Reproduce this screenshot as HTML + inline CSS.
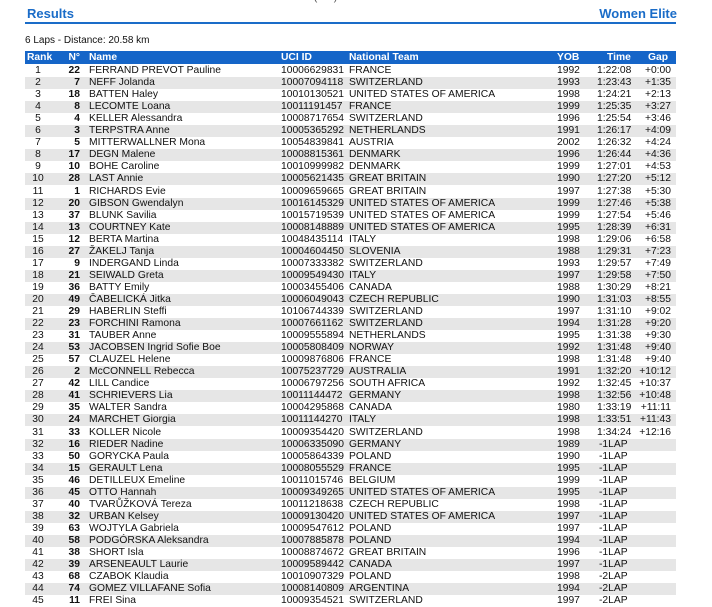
<!DOCTYPE html><html><head><meta charset="utf-8"><style>
body{margin:0;width:712px;height:607px;overflow:hidden;background:#fff;font-family:"Liberation Sans",Arial,sans-serif;position:relative;color:#111}
.t{position:absolute;left:27px;top:6px;font-weight:bold;color:#1a6cc8;font-size:13px}
.we{position:absolute;right:35px;top:6px;font-weight:bold;color:#1a6cc8;font-size:13px}
.line{position:absolute;left:25px;width:651px;top:22px;height:2px;background:#1a6cc8}
.cut{position:absolute;left:280px;top:-9px;font-size:11px;color:#555}
.d{position:absolute;left:25px;top:35px;font-size:10px}
.h{position:absolute;left:25px;width:651px;top:51px;height:13px;background:#1565c8;color:#fff;font-weight:bold;font-size:10.3px}
.r{position:absolute;left:25px;width:651px;height:12.05px;font-size:10.3px;line-height:12px}
.r:nth-child(even){background:#e6e6e6}
.r span,.h span{position:absolute;white-space:nowrap}
.h span{line-height:13px}
.a{left:0;width:26px;text-align:center}
.n{right:596px;font-weight:bold}
.m{left:64px}.u{left:256px}.c{left:324px}.y{left:532px}.tm{left:572px}.g{right:5px}
</style></head><body>
<div class="cut">·  ·  ·  ·  ·  (  ·  ·  )  ·  ·  ·  ·</div>
<div class="t">Results</div><div class="we">Women Elite</div><div class="line"></div>
<div class="d">6 Laps - Distance: 20.58 km</div>
<div class="h"><span class="a" style="text-align:left;left:2px">Rank</span><span class="n">N°</span><span class="m">Name</span><span class="u">UCI ID</span><span class="c">National Team</span><span class="y">YOB</span><span class="tm" style="left:582px">Time</span><span class="g" style="right:8px">Gap</span></div>
<div id="rows" style="position:absolute;left:0;top:65px">
<div class="r" style="top:0px"><span class="a">1</span><span class="n">22</span><span class="m">FERRAND PREVOT Pauline</span><span class="u">10006629831</span><span class="c">FRANCE</span><span class="y">1992</span><span class="tm">1:22:08</span><span class="g">+0:00</span></div>
<div class="r" style="top:12.05px"><span class="a">2</span><span class="n">7</span><span class="m">NEFF Jolanda</span><span class="u">10007094118</span><span class="c">SWITZERLAND</span><span class="y">1993</span><span class="tm">1:23:43</span><span class="g">+1:35</span></div>
<div class="r" style="top:24.1px"><span class="a">3</span><span class="n">18</span><span class="m">BATTEN Haley</span><span class="u">10010130521</span><span class="c">UNITED STATES OF AMERICA</span><span class="y">1998</span><span class="tm">1:24:21</span><span class="g">+2:13</span></div>
<div class="r" style="top:36.15px"><span class="a">4</span><span class="n">8</span><span class="m">LECOMTE Loana</span><span class="u">10011191457</span><span class="c">FRANCE</span><span class="y">1999</span><span class="tm">1:25:35</span><span class="g">+3:27</span></div>
<div class="r" style="top:48.2px"><span class="a">5</span><span class="n">4</span><span class="m">KELLER Alessandra</span><span class="u">10008717654</span><span class="c">SWITZERLAND</span><span class="y">1996</span><span class="tm">1:25:54</span><span class="g">+3:46</span></div>
<div class="r" style="top:60.25px"><span class="a">6</span><span class="n">3</span><span class="m">TERPSTRA Anne</span><span class="u">10005365292</span><span class="c">NETHERLANDS</span><span class="y">1991</span><span class="tm">1:26:17</span><span class="g">+4:09</span></div>
<div class="r" style="top:72.3px"><span class="a">7</span><span class="n">5</span><span class="m">MITTERWALLNER Mona</span><span class="u">10054839841</span><span class="c">AUSTRIA</span><span class="y">2002</span><span class="tm">1:26:32</span><span class="g">+4:24</span></div>
<div class="r" style="top:84.35px"><span class="a">8</span><span class="n">17</span><span class="m">DEGN Malene</span><span class="u">10008815361</span><span class="c">DENMARK</span><span class="y">1996</span><span class="tm">1:26:44</span><span class="g">+4:36</span></div>
<div class="r" style="top:96.4px"><span class="a">9</span><span class="n">10</span><span class="m">BOHE Caroline</span><span class="u">10010999982</span><span class="c">DENMARK</span><span class="y">1999</span><span class="tm">1:27:01</span><span class="g">+4:53</span></div>
<div class="r" style="top:108.45px"><span class="a">10</span><span class="n">28</span><span class="m">LAST Annie</span><span class="u">10005621435</span><span class="c">GREAT BRITAIN</span><span class="y">1990</span><span class="tm">1:27:20</span><span class="g">+5:12</span></div>
<div class="r" style="top:120.5px"><span class="a">11</span><span class="n">1</span><span class="m">RICHARDS Evie</span><span class="u">10009659665</span><span class="c">GREAT BRITAIN</span><span class="y">1997</span><span class="tm">1:27:38</span><span class="g">+5:30</span></div>
<div class="r" style="top:132.55px"><span class="a">12</span><span class="n">20</span><span class="m">GIBSON Gwendalyn</span><span class="u">10016145329</span><span class="c">UNITED STATES OF AMERICA</span><span class="y">1999</span><span class="tm">1:27:46</span><span class="g">+5:38</span></div>
<div class="r" style="top:144.6px"><span class="a">13</span><span class="n">37</span><span class="m">BLUNK Savilia</span><span class="u">10015719539</span><span class="c">UNITED STATES OF AMERICA</span><span class="y">1999</span><span class="tm">1:27:54</span><span class="g">+5:46</span></div>
<div class="r" style="top:156.65px"><span class="a">14</span><span class="n">13</span><span class="m">COURTNEY Kate</span><span class="u">10008148889</span><span class="c">UNITED STATES OF AMERICA</span><span class="y">1995</span><span class="tm">1:28:39</span><span class="g">+6:31</span></div>
<div class="r" style="top:168.7px"><span class="a">15</span><span class="n">12</span><span class="m">BERTA Martina</span><span class="u">10048435114</span><span class="c">ITALY</span><span class="y">1998</span><span class="tm">1:29:06</span><span class="g">+6:58</span></div>
<div class="r" style="top:180.75px"><span class="a">16</span><span class="n">27</span><span class="m">ŽAKELJ Tanja</span><span class="u">10004604450</span><span class="c">SLOVENIA</span><span class="y">1988</span><span class="tm">1:29:31</span><span class="g">+7:23</span></div>
<div class="r" style="top:192.8px"><span class="a">17</span><span class="n">9</span><span class="m">INDERGAND Linda</span><span class="u">10007333382</span><span class="c">SWITZERLAND</span><span class="y">1993</span><span class="tm">1:29:57</span><span class="g">+7:49</span></div>
<div class="r" style="top:204.85px"><span class="a">18</span><span class="n">21</span><span class="m">SEIWALD Greta</span><span class="u">10009549430</span><span class="c">ITALY</span><span class="y">1997</span><span class="tm">1:29:58</span><span class="g">+7:50</span></div>
<div class="r" style="top:216.9px"><span class="a">19</span><span class="n">36</span><span class="m">BATTY Emily</span><span class="u">10003455406</span><span class="c">CANADA</span><span class="y">1988</span><span class="tm">1:30:29</span><span class="g">+8:21</span></div>
<div class="r" style="top:228.95px"><span class="a">20</span><span class="n">49</span><span class="m">ČABELICKÁ Jitka</span><span class="u">10006049043</span><span class="c">CZECH REPUBLIC</span><span class="y">1990</span><span class="tm">1:31:03</span><span class="g">+8:55</span></div>
<div class="r" style="top:241px"><span class="a">21</span><span class="n">29</span><span class="m">HABERLIN Steffi</span><span class="u">10106744339</span><span class="c">SWITZERLAND</span><span class="y">1997</span><span class="tm">1:31:10</span><span class="g">+9:02</span></div>
<div class="r" style="top:253.05px"><span class="a">22</span><span class="n">23</span><span class="m">FORCHINI Ramona</span><span class="u">10007661162</span><span class="c">SWITZERLAND</span><span class="y">1994</span><span class="tm">1:31:28</span><span class="g">+9:20</span></div>
<div class="r" style="top:265.1px"><span class="a">23</span><span class="n">31</span><span class="m">TAUBER Anne</span><span class="u">10009555894</span><span class="c">NETHERLANDS</span><span class="y">1995</span><span class="tm">1:31:38</span><span class="g">+9:30</span></div>
<div class="r" style="top:277.15px"><span class="a">24</span><span class="n">53</span><span class="m">JACOBSEN Ingrid Sofie Boe</span><span class="u">10005808409</span><span class="c">NORWAY</span><span class="y">1992</span><span class="tm">1:31:48</span><span class="g">+9:40</span></div>
<div class="r" style="top:289.2px"><span class="a">25</span><span class="n">57</span><span class="m">CLAUZEL Helene</span><span class="u">10009876806</span><span class="c">FRANCE</span><span class="y">1998</span><span class="tm">1:31:48</span><span class="g">+9:40</span></div>
<div class="r" style="top:301.25px"><span class="a">26</span><span class="n">2</span><span class="m">McCONNELL Rebecca</span><span class="u">10075237729</span><span class="c">AUSTRALIA</span><span class="y">1991</span><span class="tm">1:32:20</span><span class="g">+10:12</span></div>
<div class="r" style="top:313.3px"><span class="a">27</span><span class="n">42</span><span class="m">LILL Candice</span><span class="u">10006797256</span><span class="c">SOUTH AFRICA</span><span class="y">1992</span><span class="tm">1:32:45</span><span class="g">+10:37</span></div>
<div class="r" style="top:325.35px"><span class="a">28</span><span class="n">41</span><span class="m">SCHRIEVERS Lia</span><span class="u">10011144472</span><span class="c">GERMANY</span><span class="y">1998</span><span class="tm">1:32:56</span><span class="g">+10:48</span></div>
<div class="r" style="top:337.4px"><span class="a">29</span><span class="n">35</span><span class="m">WALTER Sandra</span><span class="u">10004295868</span><span class="c">CANADA</span><span class="y">1980</span><span class="tm">1:33:19</span><span class="g">+11:11</span></div>
<div class="r" style="top:349.45px"><span class="a">30</span><span class="n">24</span><span class="m">MARCHET Giorgia</span><span class="u">10011144270</span><span class="c">ITALY</span><span class="y">1998</span><span class="tm">1:33:51</span><span class="g">+11:43</span></div>
<div class="r" style="top:361.5px"><span class="a">31</span><span class="n">33</span><span class="m">KOLLER Nicole</span><span class="u">10009354420</span><span class="c">SWITZERLAND</span><span class="y">1998</span><span class="tm">1:34:24</span><span class="g">+12:16</span></div>
<div class="r" style="top:373.55px"><span class="a">32</span><span class="n">16</span><span class="m">RIEDER Nadine</span><span class="u">10006335090</span><span class="c">GERMANY</span><span class="y">1989</span><span class="tm" style="left:574px">-1LAP</span></div>
<div class="r" style="top:385.6px"><span class="a">33</span><span class="n">50</span><span class="m">GORYCKA Paula</span><span class="u">10005864339</span><span class="c">POLAND</span><span class="y">1990</span><span class="tm" style="left:574px">-1LAP</span></div>
<div class="r" style="top:397.65px"><span class="a">34</span><span class="n">15</span><span class="m">GERAULT Lena</span><span class="u">10008055529</span><span class="c">FRANCE</span><span class="y">1995</span><span class="tm" style="left:574px">-1LAP</span></div>
<div class="r" style="top:409.7px"><span class="a">35</span><span class="n">46</span><span class="m">DETILLEUX Emeline</span><span class="u">10011015746</span><span class="c">BELGIUM</span><span class="y">1999</span><span class="tm" style="left:574px">-1LAP</span></div>
<div class="r" style="top:421.75px"><span class="a">36</span><span class="n">45</span><span class="m">OTTO Hannah</span><span class="u">10009349265</span><span class="c">UNITED STATES OF AMERICA</span><span class="y">1995</span><span class="tm" style="left:574px">-1LAP</span></div>
<div class="r" style="top:433.8px"><span class="a">37</span><span class="n">40</span><span class="m">TVARŮŽKOVÁ Tereza</span><span class="u">10011218638</span><span class="c">CZECH REPUBLIC</span><span class="y">1998</span><span class="tm" style="left:574px">-1LAP</span></div>
<div class="r" style="top:445.85px"><span class="a">38</span><span class="n">32</span><span class="m">URBAN Kelsey</span><span class="u">10009130420</span><span class="c">UNITED STATES OF AMERICA</span><span class="y">1997</span><span class="tm" style="left:574px">-1LAP</span></div>
<div class="r" style="top:457.9px"><span class="a">39</span><span class="n">63</span><span class="m">WOJTYLA Gabriela</span><span class="u">10009547612</span><span class="c">POLAND</span><span class="y">1997</span><span class="tm" style="left:574px">-1LAP</span></div>
<div class="r" style="top:469.95px"><span class="a">40</span><span class="n">58</span><span class="m">PODGÓRSKA Aleksandra</span><span class="u">10007885878</span><span class="c">POLAND</span><span class="y">1994</span><span class="tm" style="left:574px">-1LAP</span></div>
<div class="r" style="top:482px"><span class="a">41</span><span class="n">38</span><span class="m">SHORT Isla</span><span class="u">10008874672</span><span class="c">GREAT BRITAIN</span><span class="y">1996</span><span class="tm" style="left:574px">-1LAP</span></div>
<div class="r" style="top:494.05px"><span class="a">42</span><span class="n">39</span><span class="m">ARSENEAULT Laurie</span><span class="u">10009589442</span><span class="c">CANADA</span><span class="y">1997</span><span class="tm" style="left:574px">-1LAP</span></div>
<div class="r" style="top:506.1px"><span class="a">43</span><span class="n">68</span><span class="m">CZABOK Klaudia</span><span class="u">10010907329</span><span class="c">POLAND</span><span class="y">1998</span><span class="tm" style="left:574px">-2LAP</span></div>
<div class="r" style="top:518.15px"><span class="a">44</span><span class="n">74</span><span class="m">GOMEZ VILLAFANE Sofia</span><span class="u">10008140809</span><span class="c">ARGENTINA</span><span class="y">1994</span><span class="tm" style="left:574px">-2LAP</span></div>
<div class="r" style="top:530.2px"><span class="a">45</span><span class="n">11</span><span class="m">FREI Sina</span><span class="u">10009354521</span><span class="c">SWITZERLAND</span><span class="y">1997</span><span class="tm" style="left:574px">-2LAP</span></div>
</div>
</body></html>
